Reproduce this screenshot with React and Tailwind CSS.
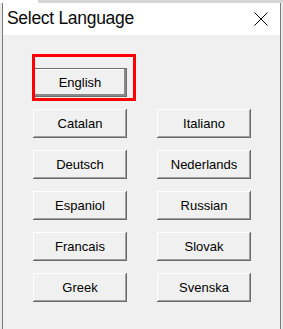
import { Fragment } from 'react';

const languages = [
    ['Catalan', 'Italiano'],
    ['Deutsch', 'Nederlands'],
    ['Espaniol', 'Russian'],
    ['Francais', 'Slovak'],
    ['Greek', 'Svenska'],
];

// classic raised win32 button
function LangButton({ label, focused }) {
    return (
        <button
            className={`w-[94px] h-[29px] bg-[#f0f0f0] text-[13px] text-black leading-none ${
                focused
                    ? 'border border-[#6d6d6d] shadow-[inset_-2px_-2px_#8a8a8a,inset_1px_1px_#fff]'
                    : 'shadow-[inset_-1px_-1px_#696969,inset_1px_1px_#fff,inset_-2px_-2px_#a0a0a0]'
            }`}
        >
            {label}
        </button>
    );
}

export default function App() {
    return (
        <div className="w-[283px] h-[329px] bg-[#eaeaea] flex flex-col overflow-hidden font-['Liberation_Sans',Arial,sans-serif]">
            {/* backdrop strip */}
            <div className="h-[3px] shrink-0 flex">
                <div className="w-[38px] bg-white" />
                <div className="flex-1 bg-[#d6d6d6]" />
            </div>

            <div className="ml-[2px] w-[279px] flex-1 flex flex-col border-x border-[#7a7a7a]">
                {/* Title bar */}
                <div className="h-[32px] bg-white flex items-center justify-between pl-[4px] pr-[12px]">
                    <span className="text-[17.5px] leading-none text-[#0a0a0a] tracking-[-0.3px]">Select Language</span>
                    <svg width="14" height="14" viewBox="0 0 14 14" className="text-black">
                        <path d="M0.5 0.5L13.5 13.5M13.5 0.5L0.5 13.5" stroke="currentColor" strokeWidth="1" fill="none" />
                    </svg>
                </div>

                {/* Body */}
                <div className="flex-1 bg-[#f0f0f0] pt-[33px] pl-[30px]">
                    <div className="relative w-[94px]">
                        <LangButton label="English" focused />
                        {/* highlight box */}
                        <div className="absolute left-[-1px] top-[-14px] w-[104px] h-[47px] border-[3px] border-[#ff0000] pointer-events-none" />
                    </div>
                    <div className="mt-[12px] grid grid-cols-[94px_94px] gap-x-[30px] gap-y-[12px]">
                        {languages.map(([a, b]) => (
                            <Fragment key={a}>
                                <LangButton label={a} />
                                <LangButton label={b} />
                            </Fragment>
                        ))}
                    </div>
                </div>
            </div>
        </div>
    );
}
